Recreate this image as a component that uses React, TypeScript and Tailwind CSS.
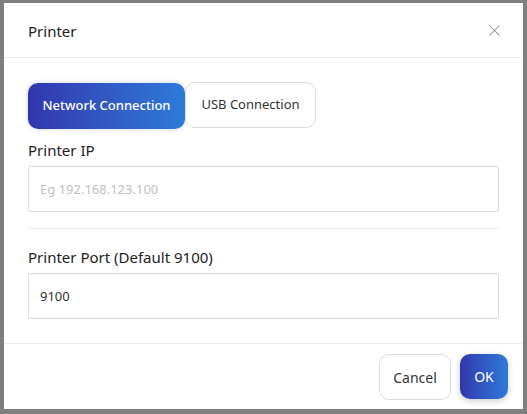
import { X } from 'lucide-react';

export default function App() {
  return (
    <div
      className="w-[527px] h-[414px] bg-[#7f7f7f] pt-[3px] pl-[4px]"
      style={{ fontFamily: '"Noto Sans", "Open Sans", sans-serif' }}
    >
      <div className="w-[519px] h-[406px] bg-white flex flex-col">
        {/* Header */}
        <div className="h-[55px] flex items-center justify-between pl-[24px] pr-[19px] border-b border-[#ececec]">
          <h2 className="text-[15px] text-[#222] pt-[2px]">Printer</h2>
          <X className="w-[19px] h-[19px] text-[#888]" strokeWidth={1.3} />
        </div>

        {/* Body */}
        <div className="flex-1 px-[24px] pt-[25px]">
          <div className="flex">
            <button className="h-[46px] w-[157px] rounded-[10px] text-[13px] font-medium text-white bg-gradient-to-r from-[#3236ae] to-[#2d7ad8] shadow-[0_0_4px_rgba(60,60,160,0.25)]">
              Network Connection
            </button>
            <button className="h-[46px] w-[131px] rounded-[10px] text-[13px] text-[#333] bg-white border border-[#dcdcdc] -mt-[1px]">
              USB Connection
            </button>
          </div>

          <label className="block mt-[10px] text-[15px] text-[#222]">Printer IP</label>
          <input
            className="mt-[4px] w-full h-[46px] border border-[#d9d9d9] rounded-[2px] px-[11px] text-[13px] text-[#333] placeholder:text-[#bfbfbf] outline-none"
            placeholder="Eg 192.168.123.100"
          />

          <div className="mt-[16px] border-t border-[#ececec]" />

          <label className="block mt-[17px] text-[15px] text-[#222]">Printer Port (Default 9100)</label>
          <input
            className="mt-[5px] w-full h-[46px] border border-[#d9d9d9] rounded-[2px] px-[11px] text-[13px] text-[#333] outline-none"
            defaultValue="9100"
          />
        </div>

        {/* Footer */}
        <div className="h-[66px] border-t border-[#ececec] flex items-start justify-end gap-[9px] pr-[15px] pt-[10px]">
          <button className="h-[46px] w-[72px] rounded-[10px] border border-[#dcdcdc] bg-white text-[14px] text-[#333]">
            Cancel
          </button>
          <button className="h-[45px] w-[48px] rounded-[10px] text-[14px] text-white bg-gradient-to-r from-[#3236ae] to-[#2d7ad8] shadow-[0_2px_6px_rgba(0,0,0,0.2)]">
            OK
          </button>
        </div>
      </div>
    </div>
  );
}
